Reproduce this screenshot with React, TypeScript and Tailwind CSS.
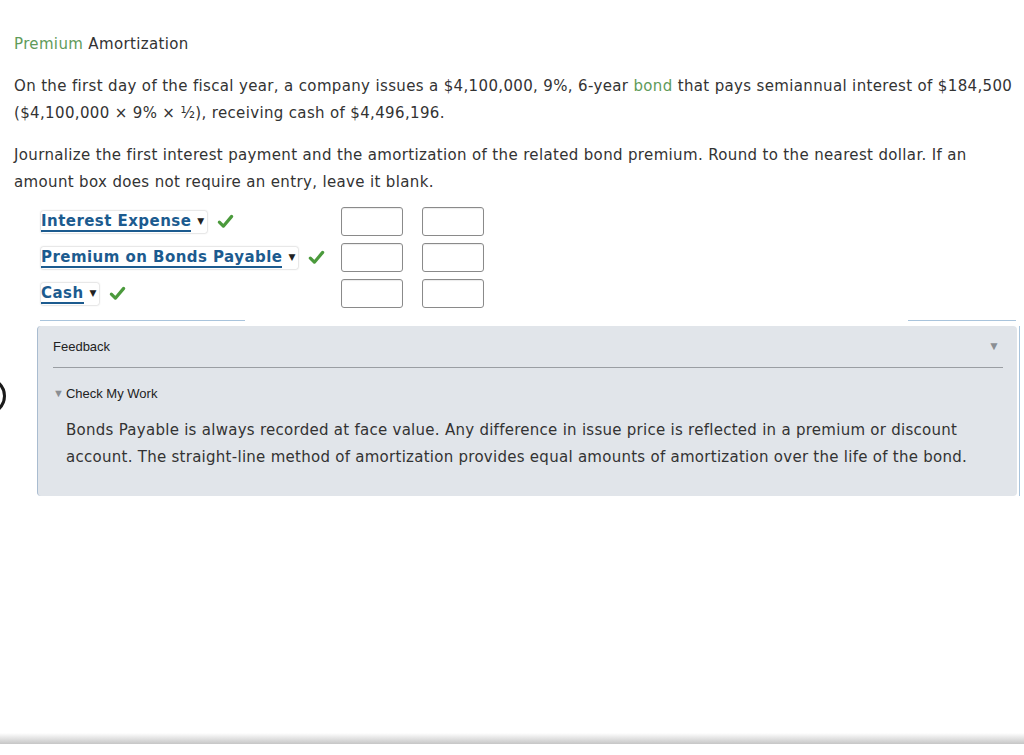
const rows = [
  { label: 'Interest Expense' },
  { label: 'Premium on Bonds Payable' },
  { label: 'Cash' },
]

function Check() {
  return (
    <svg width="17" height="17" viewBox="0 0 16 16" className="shrink-0">
      <path d="M2.2 8.6 L6 12.4 L13.8 3.2" fill="none" stroke="#4b9a3c" strokeWidth="3" strokeLinecap="round" strokeLinejoin="round" />
    </svg>
  )
}

function AccountSelect({ label }: { label: string }) {
  return (
    <div className="flex items-center gap-[10px]">
      <div className="flex items-center h-[22px] bg-white shadow-[0_0_2px_rgba(0,0,0,0.35)] rounded-[2px] pr-[3px]">
        <span className="font-bold text-[#1c5b8f] border-b-2 border-[#1c5b8f] leading-[18px] tracking-[0.45px]">{label}</span>
        <span className="ml-[6px] text-[9px] leading-none text-[#222]">▼</span>
      </div>
      <Check />
    </div>
  )
}

function AmountBox() {
  return <div className="w-[62px] h-[29px] rounded-[3px] border border-[#8a8a8a] bg-white shadow-[inset_0_1px_1px_rgba(0,0,0,0.08)]" />
}

export default function App() {
  return (
    <div className="relative h-[755px] flex flex-col bg-white text-[#333] overflow-hidden" style={{ fontFamily: '"DejaVu Sans", Verdana, sans-serif' }}>
      <div className="pl-[14px] pr-[6px] pt-[31px] text-[15px] leading-[27px] tracking-[0.35px]">
        <h2 className="font-normal">
          <span className="text-[#5f9b5a]">Premium</span> Amortization
        </h2>

        <p className="mt-[15px]">
          On the first day of the fiscal year, a company issues a $4,100,000, 9%, 6-year{' '}
          <span className="text-[#5f9b5a]">bond</span> that pays semiannual interest of $184,500 ($4,100,000 × 9% × ½), receiving cash of $4,496,196.
        </p>

        <p className="mt-[15px] pr-[40px]">
          Journalize the first interest payment and the amortization of the related bond premium. Round to the nearest dollar. If an amount box does not require an entry, leave it blank.
        </p>

        <div className="mt-[11px] ml-[27px] flex flex-col gap-[7px] tracking-normal">
          {rows.map((r) => (
            <div key={r.label} className="flex items-center h-[29px]">
              <div className="w-[300px]">
                <AccountSelect label={r.label} />
              </div>
              <div className="flex gap-[19px]">
                <AmountBox />
                <AmountBox />
              </div>
            </div>
          ))}
        </div>
      </div>

      {/* tab lines above feedback */}
      <div className="mt-[12px] flex justify-between pl-[40px] pr-[8px]">
        <div className="w-[205px] h-px bg-[#a9c4dc]" />
        <div className="w-[108px] h-px bg-[#a9c4dc]" />
      </div>

      <div className="mt-[5px] ml-[37px] mr-[4px] flex">
        <div className="flex-1 border-l border-[#a9bcd0] bg-[#e1e5ea] rounded-[4px] pl-[15px] pr-[14px] pt-[13px] pb-[25px]" style={{ fontFamily: '"Liberation Sans", Arial, sans-serif' }}>
          <div className="flex items-start justify-between">
            <span className="text-[13px] leading-[15px] text-[#222]">Feedback</span>
            <span className="text-[12px] leading-none text-[#8a8e93] mt-[1px] mr-[3px]">▼</span>
          </div>
          <div className="mt-[13px] h-px bg-[#9a9ea3]" />
          <div className="mt-[18px] flex items-center text-[13px] leading-[15px] text-[#222]">
            <span className="text-[11px] text-[#8a8e93] mr-[2px]">▼</span>
            Check My Work
          </div>
          <p className="mt-[16px] ml-[13px] text-[15px] leading-[27px] tracking-[0.27px] text-[#333]" style={{ fontFamily: '"DejaVu Sans", Verdana, sans-serif' }}>
            Bonds Payable is always recorded at face value. Any difference in issue price is reflected in a premium or discount account. The straight-line method of amortization provides equal amounts of amortization over the life of the bond.
          </p>
        </div>
        <div className="w-[1px] ml-[2px] bg-[#a9c4dc] self-stretch" />
      </div>

      {/* partial ring at left edge */}
      <div className="absolute left-[-32px] top-[377px] w-[38px] h-[38px] rounded-full border-[3px] border-[#1a1a1a]" />

      <div className="mt-auto mb-[11px] h-[11px] bg-gradient-to-b from-white to-[#c6c6c6]" />
    </div>
  )
}
